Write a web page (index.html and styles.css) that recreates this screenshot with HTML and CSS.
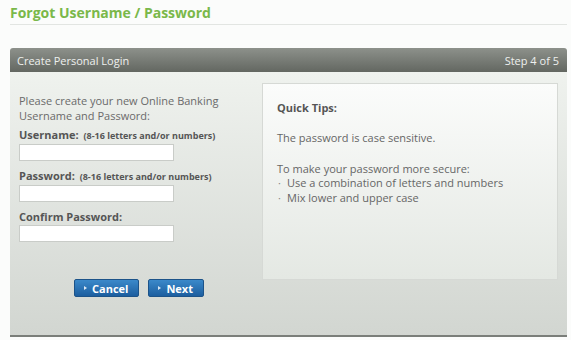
FILE: index.html
```html
<!DOCTYPE html>
<html>
<head>
<meta charset="utf-8">
<link rel="stylesheet" href="styles.css">
</head>
<body>
<div class="page">
  <h1 class="title">Forgot Username / Password</h1>
  <div class="panel">
    <div class="panel-head">
      <span>Create Personal Login</span>
      <span>Step 4 of 5</span>
    </div>
    <div class="panel-body">
      <div class="form-col">
        <p class="intro">Please create your new Online Banking Username and Password:</p>
        <label class="lbl">Username: <small>(8-16 letters and/or numbers)</small></label>
        <input class="field" type="text">
        <label class="lbl">Password: <small>(8-16 letters and/or numbers)</small></label>
        <input class="field" type="password">
        <label class="lbl">Confirm Password:</label>
        <input class="field" type="password">
        <div class="buttons">
          <button class="btn"><span class="tri"></span>Cancel</button>
          <button class="btn"><span class="tri"></span>Next</button>
        </div>
      </div>
      <div class="tips">
        <p class="tips-title">Quick Tips:</p>
        <p class="tip">The password is case sensitive.</p>
        <p class="tip2">To make your password more secure:</p>
        <ul class="tip-list">
          <li>Use a combination of letters and numbers</li>
          <li>Mix lower and upper case</li>
        </ul>
      </div>
    </div>
  </div>
</div>
</body>
</html>
```
FILE: styles.css
```css
* { box-sizing: border-box; }
html, body { margin: 0; padding: 0; background: #fbfcfb; }
body { font-family: "Open Sans", "DejaVu Sans", sans-serif; color: #666; }
.page { padding: 3px 4px 0 10px; width: 571px; height: 340px; overflow: hidden; }
.title {
  margin: 0;
  font-size: 14px;
  line-height: 19px;
  font-weight: 700;
  color: #7ab84a;
  padding-bottom: 2px;
  border-bottom: 1px solid #e2e5e2;
}
.panel { margin-top: 23px; width: 557px; }
.panel-head {
  height: 24px;
  display: flex;
  justify-content: space-between;
  align-items: center;
  padding: 0 8px 0 7px;
  background: linear-gradient(#8d918b, #636761);
  border-radius: 3px 3px 0 0;
  color: #eef0ee;
  font-size: 11px;
}
.panel-body {
  height: 265px;
  display: flex;
  background: linear-gradient(#eff2ee, #d2d6d1);
  border-bottom: 2px solid #7a7e79;
  padding: 11px 9px 0 9px;
}
.form-col { width: 243px; display: flex; flex-direction: column; align-items: flex-start; }
.intro { margin: 10px 0 4px; font-size: 11px; line-height: 15px; color: #6a6a6a; width: 215px; }
.lbl { font-size: 11px; font-weight: 700; line-height: 15px; color: #555; }
.lbl small { font-size: 9px; font-weight: 700; margin-left: 2px; }
.field {
  margin: 1px 0 7px;
  width: 155px;
  height: 17px;
  border: 1px solid #c9ccc8;
  background: #fff;
  padding: 0;
}
.buttons { display: flex; gap: 9px; margin: 30px 0 0 55px; }
.btn {
  height: 18px;
  padding: 0 10px 0 9px;
  border: 1px solid #1c5389;
  border-radius: 2px;
  background: linear-gradient(#3b89ca, #1c5e9f);
  color: #fff;
  font-family: "Open Sans", sans-serif;
  font-weight: 700;
  font-size: 11px;
  display: flex;
  align-items: center;
  gap: 5px;
}
.tri {
  width: 0; height: 0;
  border-left: 3px solid #dce8f4;
  border-top: 2.5px solid transparent;
  border-bottom: 2.5px solid transparent;
}
.tips {
  width: 296px;
  height: 197px;
  border: 1px solid #d6d9d5;
  background: linear-gradient(#fbfcfb, #e4e8e3);
  padding: 0 14px;
}
.tips p { margin: 0; font-size: 11px; line-height: 15px; }
.tips-title { font-weight: 700; color: #555; margin-top: 16px !important; }
.tip { margin-top: 15px !important; }
.tip2 { margin-top: 16px !important; }
.tip-list { margin: 0; padding: 0; list-style: none; font-size: 11px; line-height: 14.5px; }
.tip-list li { padding-left: 10px; position: relative; }
.tip-list li::before { content: "·"; position: absolute; left: 1px; color: #888; }
```
